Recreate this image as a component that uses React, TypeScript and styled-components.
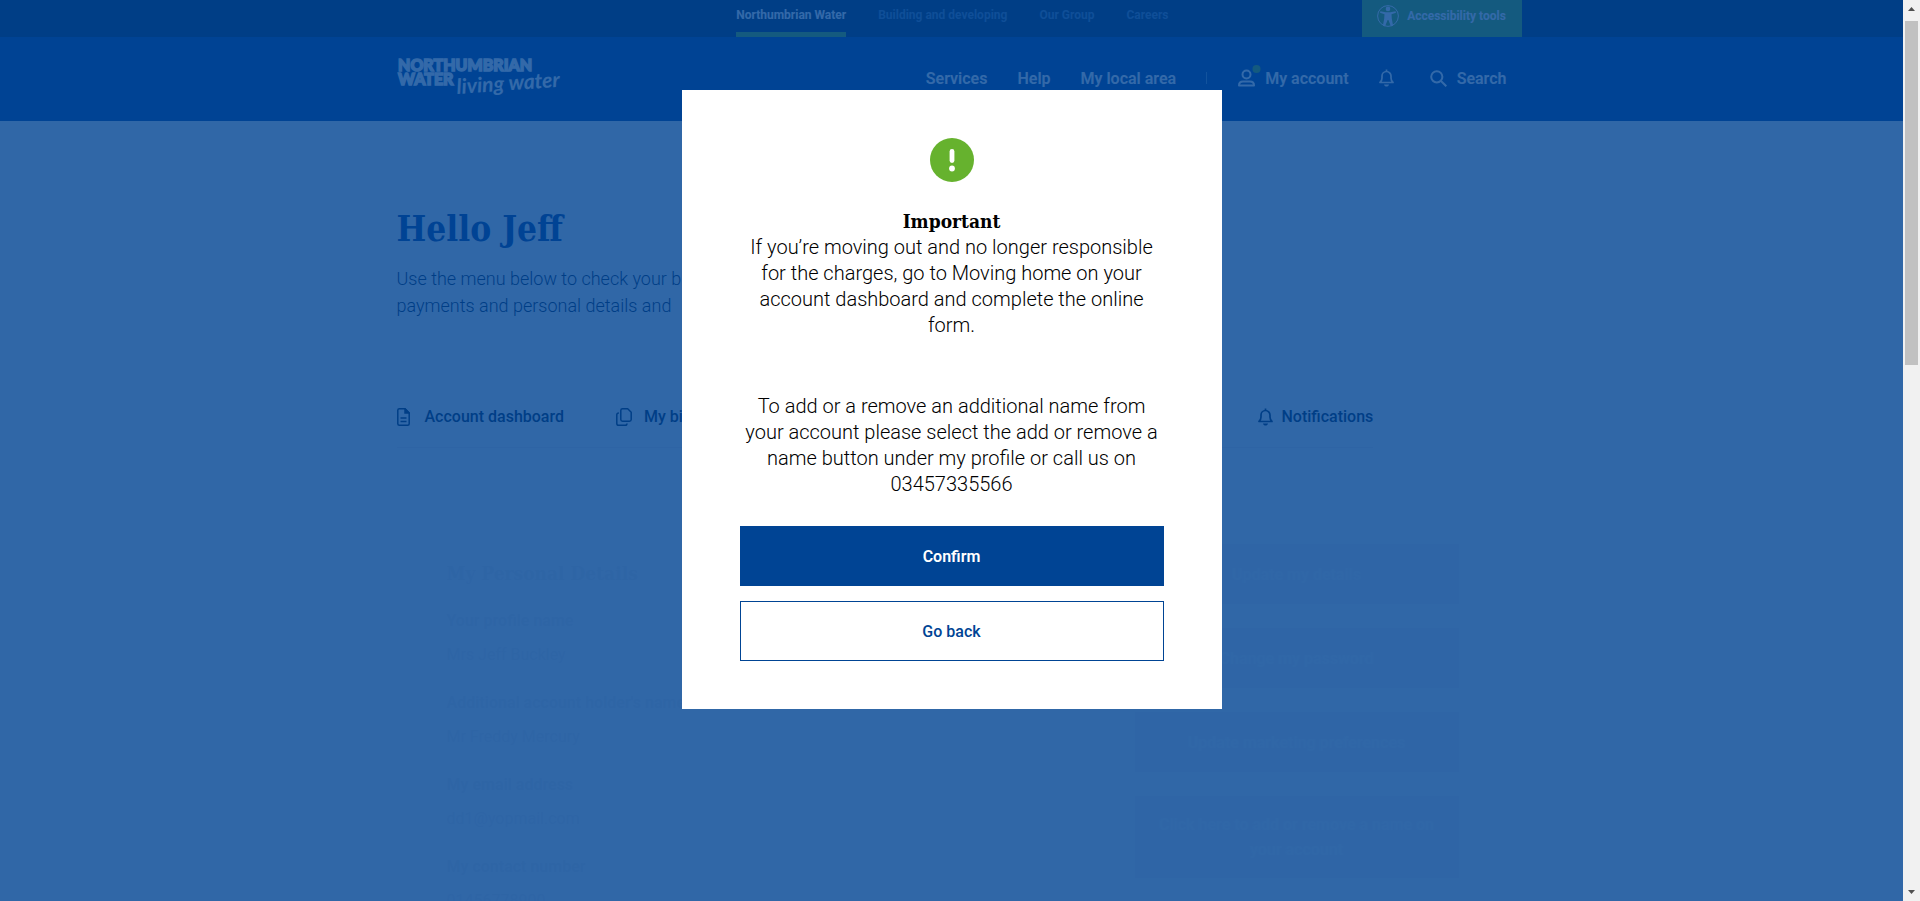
import React from "react";
import styled, { createGlobalStyle } from "styled-components";

const navy = "#002b53";
const blue = "#004494";
const green = "#66b22e";
const sans = `"Roboto", "Open Sans", "Liberation Sans", sans-serif`;
const slab = `"DejaVu Serif Condensed", "DejaVu Serif", "Liberation Serif", serif`;

const GlobalStyle = createGlobalStyle`
  *, *::before, *::after { box-sizing: border-box; }
  body { margin: 0; font-family: ${sans}; font-size: 16px; color: ${navy}; }
  h1, h2, p, dl, dd, dt { margin: 0; }
  a { color: inherit; text-decoration: none; }
  button { font: inherit; cursor: pointer; }
  svg { display: block; flex: none; }
`;

const Screen = styled.div`
  display: flex;
  height: 100vh;
  overflow: hidden;
`;

const Viewport = styled.div`
  position: relative;
  flex: 1;
  min-width: 0;
  overflow: hidden;
  background: #f1f3f5;
`;

const TopBar = styled.div`
  background: ${navy};
`;

const TopBarInner = styled.div`
  display: flex;
  justify-content: flex-end;
  max-width: 1140px;
  height: 37px;
  margin: 0 auto;
`;

const SiteNav = styled.nav`
  display: flex;
  gap: 32px;
  margin-right: 193px;
  font-size: 12px;
  font-weight: 700;
  line-height: 30px;
`;

const SiteLink = styled.a<{ $active?: boolean }>`
  color: ${(p) => (p.$active ? "#fff" : "#4b7ba8")};
  border-bottom: 5px solid ${(p) => (p.$active ? green : "transparent")};
`;

const AccessButton = styled.button`
  display: flex;
  align-items: center;
  justify-content: center;
  gap: 8px;
  width: 160px;
  padding: 0 0 6px;
  border: 0;
  background: ${green};
  color: #fff;
  font-size: 12px;
  font-weight: 700;
`;

const MainBar = styled.header`
  background: ${blue};
`;

const MainBarInner = styled.div`
  display: flex;
  align-items: center;
  justify-content: space-between;
  max-width: 1140px;
  height: 84px;
  margin: 0 auto;
  padding: 0 15px 2px;
`;

const MainNav = styled.nav`
  display: flex;
  align-items: center;
  gap: 30px;
  color: #fff;
  font-weight: 600;
`;

const NavLink = styled.a<{ $tight?: boolean }>`
  display: flex;
  align-items: center;
  gap: ${(p) => (p.$tight ? 4 : 10)}px;
`;

const AlertsLink = styled(NavLink)`
  padding-right: 6px;
`;

const Divider = styled.span`
  width: 1px;
  height: 12px;
  background: #5c8fc4;
`;

const Page = styled.main`
  max-width: 1140px;
  margin: 0 auto;
  padding: 84px 15px 0;
`;

const Heading = styled.h1`
  font-family: ${slab};
  font-size: 35px;
  font-weight: 700;
  line-height: 48px;
  color: ${blue};
`;

const Intro = styled.p`
  margin-top: 12px;
  font-size: 18px;
  font-weight: 300;
  line-height: 27px;
`;

const Tabs = styled.nav`
  display: flex;
  gap: 52px;
  width: 88%;
  margin-top: 86px;
  padding-bottom: 18px;
  border-bottom: 1px solid #e3e7eb;
  font-weight: 500;
  line-height: 24px;
`;

const Tab = styled.a<{ $gap: number; $end?: boolean }>`
  display: flex;
  align-items: center;
  gap: ${(p) => p.$gap}px;
  margin-left: ${(p) => (p.$end ? "auto" : "0")};
`;

const Profile = styled.section`
  display: flex;
  justify-content: space-between;
  padding: 96px 48px 0 50px;
`;

const Summary = styled.div`
  opacity: 0.05;
`;

const ProfileTitle = styled.h2`
  margin: 14px 0 16px;
  font-family: ${slab};
  font-size: 19px;
  font-weight: 700;
  line-height: 30px;
`;

const Details = styled.dl`
  dt { font-weight: 600; line-height: 34px; }
  dd { line-height: 34px; margin-bottom: 14px; }
`;

const Actions = styled.div`
  display: flex;
  flex-direction: column;
  gap: 24px;
  width: 324px;
  opacity: 0.03;
`;

const Action = styled.button`
  min-height: 60px;
  padding: 16px;
  border: 0;
  background: ${blue};
  color: #fff;
  font-weight: 600;
  line-height: 25px;
`;

const Overlay = styled.div`
  position: absolute;
  inset: 0;
  display: flex;
  align-items: flex-start;
  justify-content: center;
  padding-top: 10vh;
  background: rgba(0, 68, 148, 0.8);
`;

const Dialog = styled.div`
  display: flex;
  flex-direction: column;
  align-items: center;
  width: 540px;
  padding: 48px 58px;
  background: #fff;
  color: #000;
  text-align: center;
`;

const DialogTitle = styled.h2`
  margin-top: 26px;
  font-family: ${slab};
  font-size: 19px;
  font-weight: 700;
  line-height: 26px;
`;

const DialogText = styled.p`
  font-size: 20px;
  font-weight: 300;
  line-height: 26px;

  & + & { margin-top: 55px; }
`;

const DialogActions = styled.div`
  display: flex;
  flex-direction: column;
  gap: 15px;
  width: 100%;
  margin-top: 29px;
`;

const DialogButton = styled.button<{ $primary?: boolean }>`
  height: 60px;
  border: 1px solid ${blue};
  background: ${(p) => (p.$primary ? blue : "#fff")};
  color: ${(p) => (p.$primary ? "#fff" : blue)};
  font-weight: ${(p) => (p.$primary ? 600 : 500)};
`;

const Scrollbar = styled.div`
  display: flex;
  flex-direction: column;
  align-items: center;
  width: 17px;
  padding: 7px 0;
  background: #f1f1f1;
`;

const ScrollThumb = styled.div`
  width: 13px;
  height: 344px;
  margin: 10px 0 auto;
  background: #c1c1c1;
`;

const Logo = () => (
  <svg width="166" height="46" viewBox="0 0 166 46" fill="#fff" role="img" aria-label="Northumbrian Water living water">
    <text x="1" y="16" fontFamily="Lato" fontWeight="900" fontSize="16" stroke="#fff" strokeWidth="1.4">NORTHUMBRIAN</text>
    <text x="1" y="30" fontFamily="Lato" fontWeight="900" fontSize="16" stroke="#fff" strokeWidth="1.4">WATER</text>
    <text x="60" y="39" fontFamily="Lato" fontStyle="italic" fontWeight="700" fontSize="21" transform="rotate(-4 60 39)">living water</text>
  </svg>
);

const PersonIcon = () => (
  <svg width="22" height="22" viewBox="0 0 22 22" fill="none" stroke="currentColor">
    <circle cx="11" cy="11" r="10.4" strokeWidth="1" />
    <circle cx="11" cy="3.9" r="2.3" fill="currentColor" stroke="none" />
    <path d="M3.400 6.200 8.500 7.200h5l5.100-1 .4 1.600-4.500 1.500.3 4.500 1.300 7-2.200.4L11.400 15h-.8L8.100 21.200l-2.200-.4 1.300-7 .3-4.500L3 7.800z" fill="currentColor" stroke="none" />
  </svg>
);

const AccountIcon = () => (
  <svg width="24" height="26" viewBox="0 0 24 26" fill="none" stroke="currentColor" strokeWidth="2">
    <circle cx="9.500" cy="9.500" r="4" />
    <path d="M2 20.500c0-2.500 1.500-4 4-4h7c2.500 0 4 1.500 4 4z" strokeLinejoin="round" />
    <circle cx="19.500" cy="4" r="4" fill={green} stroke="none" />
  </svg>
);

const BellIcon = () => (
  <svg width="15" height="18" viewBox="0 0 15 18" fill="none" stroke="currentColor" strokeWidth="1.700">
    <path d="M1 13.500h13c-1.500-1.300-2-2.500-2-4.500V7a4.500 4.500 0 0 0-9 0v2c0 2-.5 3.200-2 4.500z" strokeLinejoin="round" />
    <path d="M7.500 2.500V.5" />
    <path d="M5 15.600h5c-.4 1.500-1.200 2-2.500 2s-2.100-.5-2.500-2z" fill="currentColor" stroke="none" />
  </svg>
);

const SearchIcon = () => (
  <svg width="17" height="17" viewBox="0 0 17 17" fill="none" stroke="currentColor" strokeWidth="2">
    <circle cx="6.800" cy="6.800" r="5.600" />
    <path d="m11 11 5.300 5.300" />
  </svg>
);

const DocumentIcon = () => (
  <svg width="13" height="18" viewBox="0 0 13 18" fill="none" stroke="currentColor" strokeWidth="1.500">
    <path d="M8 .8H2.300C1.300.8.8 1.300.8 2.300v13.400c0 1 .5 1.500 1.500 1.500h8.400c1 0 1.500-.5 1.500-1.500V5z" strokeLinejoin="round" />
    <path d="M8 .8V5h4.200z" fill="currentColor" />
    <path d="M3.500 10h6M3.500 13.500h6" />
  </svg>
);

const CopyIcon = () => (
  <svg width="16" height="18" viewBox="0 0 16 18" fill="none" stroke="currentColor" strokeWidth="1.500">
    <path d="M6.500.8h5.200l3.500 3.500v7.200c0 1-.6 1.700-1.700 1.700h-7c-1.100 0-1.700-.7-1.700-1.700V2.500C4.800 1.500 5.400.8 6.500.8z" strokeLinejoin="round" />
    <path d="M2.900 5C1.500 5 .8 5.700.8 6.800v8.600c0 1.200.6 1.800 1.800 1.800h6.600c1.200 0 1.800-.6 1.800-1.800" />
  </svg>
);

const AlertIcon = () => (
  <svg width="44" height="44" viewBox="0 0 44 44" aria-hidden="true">
    <circle cx="22" cy="22" r="22" fill={green} />
    <rect x="19.600" y="11" width="4.800" height="14" rx="2.400" fill="#fff" />
    <circle cx="22" cy="30.500" r="2.900" fill="#fff" />
  </svg>
);

const ScrollArrow = ({ down = false }: { down?: boolean }) => (
  <svg width="7" height="4" viewBox="0 0 7 4" aria-hidden="true">
    <path d={down ? "M0 0h7L3.500 4z" : "M0 4h7L3.500 0z"} fill="#505050" />
  </svg>
);

const details = [
  ["Your profile name", "Mrs Jeff Buckley"],
  ["Additional account holder's name", "Mr Freddy Mercury"],
  ["My email address", "dd1@yopmail.com"],
  ["My contact number", "01456778900"],
];

const actions = [
  "Update my details",
  "Change my password",
  "Update marketing preferences",
  "Click here to add or remove a name on your account",
];

export default function App() {
  return (
    <Screen>
      <GlobalStyle />
      <Viewport>
        <TopBar>
          <TopBarInner>
            <SiteNav>
              <SiteLink href="#" $active>Northumbrian Water</SiteLink>
              <SiteLink href="#">Building and developing</SiteLink>
              <SiteLink href="#">Our Group</SiteLink>
              <SiteLink href="#">Careers</SiteLink>
            </SiteNav>
            <AccessButton><PersonIcon />Accessibility tools</AccessButton>
          </TopBarInner>
        </TopBar>
        <MainBar>
          <MainBarInner>
            <Logo />
            <MainNav>
              <NavLink href="#">Services</NavLink>
              <NavLink href="#">Help</NavLink>
              <NavLink href="#">My local area</NavLink>
              <Divider />
              <NavLink href="#" $tight><AccountIcon />My account</NavLink>
              <AlertsLink href="#" aria-label="Alerts"><BellIcon /></AlertsLink>
              <NavLink href="#"><SearchIcon />Search</NavLink>
            </MainNav>
          </MainBarInner>
        </MainBar>
        <Page>
          <Heading>Hello Jeff</Heading>
          <Intro>
            Use the menu below to check your bills,<br />
            payments and personal details and
          </Intro>
          <Tabs>
            <Tab href="#" $gap={15}><DocumentIcon />Account dashboard</Tab>
            <Tab href="#" $gap={12}><CopyIcon />My bills</Tab>
            <Tab href="#" $gap={9} $end><BellIcon />Notifications</Tab>
          </Tabs>
          <Profile>
            <Summary>
              <ProfileTitle>My Personal Details</ProfileTitle>
              <Details>
                {details.map(([label, value]) => (
                  <React.Fragment key={label}>
                    <dt>{label}</dt>
                    <dd>{value}</dd>
                  </React.Fragment>
                ))}
              </Details>
            </Summary>
            <Actions>
              {actions.map((label) => (
                <Action key={label}>{label}</Action>
              ))}
            </Actions>
          </Profile>
        </Page>
        <Overlay>
          <Dialog role="dialog" aria-modal="true" aria-labelledby="dialog-title">
            <AlertIcon />
            <DialogTitle id="dialog-title">Important</DialogTitle>
            <DialogText>
              If you’re moving out and no longer responsible for the charges, go to Moving home on your
              account dashboard and complete the online form.
            </DialogText>
            <DialogText>
              To add or a remove an additional name from your account please select the add or remove a
              name button under my profile or call us on 03457335566
            </DialogText>
            <DialogActions>
              <DialogButton $primary>Confirm</DialogButton>
              <DialogButton>Go back</DialogButton>
            </DialogActions>
          </Dialog>
        </Overlay>
      </Viewport>
      <Scrollbar>
        <ScrollArrow />
        <ScrollThumb />
        <ScrollArrow down />
      </Scrollbar>
    </Screen>
  );
}
